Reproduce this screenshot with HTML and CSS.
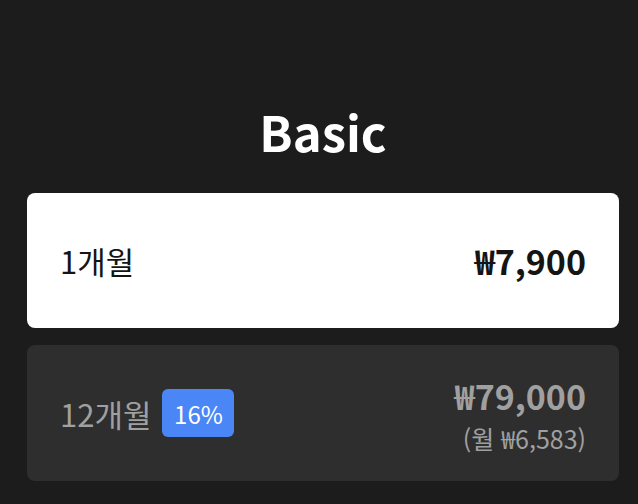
FILE: index.html
```html
<!DOCTYPE html>
<html lang="ko">

<head>
    <meta charset="UTF-8">
    <meta name="viewport" content="width=device-width, initial-scale=1.0">
    <title>Basic 요금제</title>
    <link rel="stylesheet" href="styles.css">
</head>

<body>
    <div class="plan">
        <h1 class="plan-title">Basic</h1>

        <!-- 월간 결제 (선택됨) -->
        <div class="option selected">
            <div class="period">1개월</div>
            <div class="price-box">
                <div class="price">₩7,900</div>
            </div>
        </div>

        <!-- 연간 결제 -->
        <div class="option">
            <div class="period">12개월 <span class="badge">16%</span></div>
            <div class="price-box">
                <div class="price">₩79,000</div>
                <div class="monthly">(월 ₩6,583)</div>
            </div>
        </div>
    </div>
</body>

</html>
```

FILE: styles.css
```css
body {
    margin: 0;
    background: #1c1c1c;
    font-family: "Noto Sans CJK KR", "Noto Sans", sans-serif;
}

.plan {
    width: 592px;
    padding: 95px 19px 0 27px;
    display: flex;
    flex-direction: column;
    gap: 17px;
}

.plan-title {
    margin: 0 0 9px;
    color: #fff;
    font-size: 49px;
    font-weight: 700;
    line-height: 72px;
    text-align: center;
}

.option {
    height: 135px;
    padding: 0 33px;
    box-sizing: border-box;
    border-radius: 8px;
    background: #2e2e2e;
    color: #a0a0a0;
    display: flex;
    align-items: center;
    justify-content: space-between;
}

.option + .option {
    height: 136px;
}

.option.selected {
    background: #fff;
    color: #141414;
}

.period {
    display: flex;
    align-items: center;
    gap: 11px;
    font-size: 31px;
}

.badge {
    width: 72px;
    height: 48px;
    border-radius: 6px;
    background: #4a86f6;
    color: #fff;
    font-size: 24px;
    display: flex;
    align-items: center;
    justify-content: center;
}

.price-box {
    text-align: right;
}

.price {
    font-size: 34px;
    font-weight: 700;
}

.monthly {
    font-size: 25px;
}
```
